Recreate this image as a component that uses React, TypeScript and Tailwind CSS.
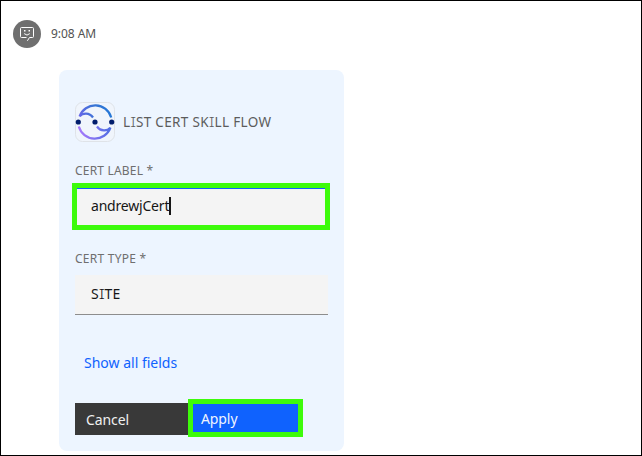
import React from "react";

function SerifI() {
  return <span className="font-['Inter'] text-[0.96em] font-light [font-feature-settings:'cv08'] tracking-normal">I</span>;
}

function BotAvatar() {
  return (
    <div className="flex size-7 shrink-0 items-center justify-center rounded-full bg-[#6f6f6f]">
      <svg width="16" height="16" viewBox="0 0 16 16" fill="none" stroke="#ffffff" strokeWidth="1">
        <path d="M7.5 11.5H2.5a1 1 0 0 1-1-1V2.5a1 1 0 0 1 1-1h11a1 1 0 0 1 1 1v8a1 1 0 0 1-1 1H10.5L8.4 14.8" />
        <path d="M5.2 7.6Q8 10.6 10.8 7.6" />
        <rect x="5" y="4" width="1.5" height="1.5" fill="#ffffff" stroke="none" />
        <rect x="9.5" y="4" width="1.5" height="1.5" fill="#ffffff" stroke="none" />
      </svg>
    </div>
  );
}

function SkillLogo() {
  return (
    <div className="size-10 shrink-0">
      <svg width="40" height="40" viewBox="0 0 40 40" fill="none">
        <defs>
          <linearGradient id="top" x1="4" y1="16" x2="36" y2="8" gradientUnits="userSpaceOnUse">
            <stop stopColor="#6a67ea" />
            <stop offset="0.5" stopColor="#3974d4" />
            <stop offset="1" stopColor="#2477d6" />
          </linearGradient>
          <linearGradient id="bottom" x1="4" y1="32" x2="36" y2="25" gradientUnits="userSpaceOnUse">
            <stop stopColor="#a879fb" />
            <stop offset="1" stopColor="#4b6de2" />
          </linearGradient>
        </defs>
        <rect x="0.5" y="0.5" width="39" height="39" rx="7" fill="#f0f5fc" stroke="#dfe3e8" />
        <path d="M36.2 15.5A16.6 16.6 0 0 0 4.6 14.4C7.5 10.8 14.5 10.3 18 15.5" stroke="url(#top)" strokeWidth="2.3" />
        <path d="M3.8 24.5A16.6 16.6 0 0 0 35.4 25.6C32.5 29.2 25.5 29.7 22 24.5" stroke="url(#bottom)" strokeWidth="2.3" />
        <circle cx="3.3" cy="20" r="2.6" fill="#001d6c" />
        <circle cx="20" cy="20" r="2.6" fill="#001d6c" />
        <circle cx="36.7" cy="20" r="2.6" fill="#001d6c" />
      </svg>
    </div>
  );
}

export default function App() {
  return (
    <main className="h-[456px] w-[642px] overflow-hidden border border-black bg-white font-['Noto_Sans','Open_Sans',sans-serif] whitespace-nowrap text-[#161616]">
      <header className="flex h-7 items-center gap-2.5 pl-3 mt-[19px]">
        <BotAvatar />
        <time className="text-xs tracking-[-0.05px] text-[#525252]">9:08 AM</time>
      </header>
      <section className="mt-[22px] ml-[58px] flex h-[381px] w-[285px] flex-col rounded-lg bg-[#edf5ff] px-4 pt-8">
        <div className="flex h-10 items-center gap-2">
          <SkillLogo />
          <h1 className="text-[13.5px] tracking-[0.35px] text-[#5c5c5c]">
            L<SerifI />ST CERT SK<SerifI />LL FLOW
          </h1>
        </div>
        <label className="mt-[21px] h-4 text-xs leading-4 tracking-[0.2px] text-[#6f6f6f]">CERT LABEL *</label>
        <div className="mt-1 -ml-[3px] h-[47px] w-[258px] border-[5px] border-[#3dfb0b]">
          <div className="flex h-full items-center border-t border-[#0f62fe] bg-[#f4f4f4] pb-[3px] pl-3.5 text-[14px]">
            <span className="tracking-[-0.2px]">andrewjCert</span>
            <span className="h-[18px] w-0.5 bg-[#161616]" />
          </div>
        </div>
        <label className="mt-[21px] h-4 text-xs leading-4 tracking-[0.25px] text-[#6f6f6f]">CERT TYPE *</label>
        <div className="mt-2 flex h-10 items-center border-b border-[#8d8d8d] bg-[#f4f4f4] pb-0.5 pl-4 text-[14px]">
          <span className="tracking-[0.25px]">S<SerifI />TE</span>
        </div>
        <a className="mt-[38px] ml-[9px] h-5 text-[14px] leading-5 text-[#0f62fe]">Show all fields</a>
        <div className="mt-[26px] flex h-[38px] items-start">
          <button className="mt-1 h-8 w-[113px] bg-[#393939] pl-[11px] text-left text-[14px] tracking-[-0.1px] text-[#f0f0f0]">Cancel</button>
          <button className="h-[38px] w-[115px] border-[5px] border-[#3dfb0b] bg-[#0f62fe] pt-px pl-2 text-left text-[14px] tracking-[-0.1px] text-[#f0f4ff]">Apply</button>
        </div>
      </section>
    </main>
  );
}
